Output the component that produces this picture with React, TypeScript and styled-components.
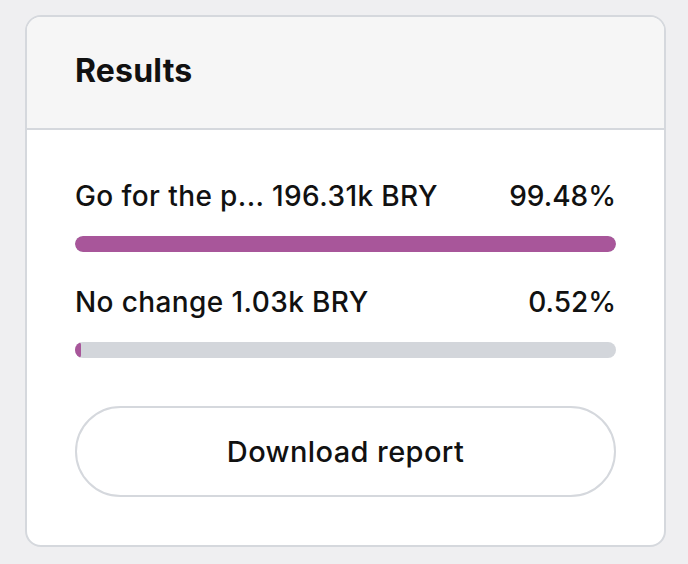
import React from 'react';
import styled, { createGlobalStyle } from 'styled-components';

const GlobalStyle = createGlobalStyle`
  html, body {
    margin: 0;
    padding: 0;
    background: #efeff1;
  }
  body {
    font-family: Inter, "Noto Sans", sans-serif;
    color: #111;
  }
`;

const Page = styled.div`
  padding: 15px 22px 17px 25px;
`;

const Card = styled.section`
  border: 2px solid #d5d8dd;
  border-radius: 16px;
  background: #fff;
  overflow: hidden;
`;

const Header = styled.header`
  height: 113px;
  display: flex;
  align-items: center;
  padding: 0 48px 4px;
  box-sizing: border-box;
  background: #f6f6f6;
  border-bottom: 2px solid #d5d8dd;
`;

const Title = styled.h2`
  margin: 0;
  font-size: 32px;
  font-weight: 700;
  letter-spacing: 0.2px;
`;

const Body = styled.div`
  padding: 50px 48px 48px;
  display: flex;
  flex-direction: column;
`;

const Row = styled.div`
  display: flex;
  flex-direction: column;
  gap: 24px;
  margin-bottom: 34px;
`;

const RowHead = styled.div`
  display: flex;
  justify-content: space-between;
  align-items: baseline;
  font-size: 28px;
  font-weight: 500;
  letter-spacing: 0.4px;
  line-height: 32px;
`;

const Pct = styled.span`
  letter-spacing: 0;
`;

const Track = styled.div`
  height: 16px;
  border-radius: 8px;
  background: #d3d6db;
  overflow: hidden;
`;

const Fill = styled.div`
  height: 100%;
  background: #a8569a;
  border-radius: 8px;
`;

const Button = styled.button`
  margin-top: 14px;
  height: 91px;
  border: 2px solid #d5d8dd;
  border-radius: 46px;
  background: #fff;
  font-family: inherit;
  font-size: 29px;
  font-weight: 500;
  letter-spacing: 0.4px;
  color: #111;
`;

const results = [
  { label: 'Go for the p... 196.31k BRY', pct: 99.48 },
  { label: 'No change 1.03k BRY', pct: 0.52 },
];

const App = () => {
  return (
    <Page>
      <GlobalStyle />
      <Card>
        <Header>
          <Title>Results</Title>
        </Header>
        <Body>
          {results.map((r) => (
            <Row key={r.label}>
              <RowHead>
                <span>{r.label}</span>
                <Pct>{r.pct.toFixed(2)}%</Pct>
              </RowHead>
              <Track>
                <Fill style={{ width: `calc(${r.pct}% + 3px)` }} />
              </Track>
            </Row>
          ))}
          <Button>Download report</Button>
        </Body>
      </Card>
    </Page>
  );
};

export default App;
